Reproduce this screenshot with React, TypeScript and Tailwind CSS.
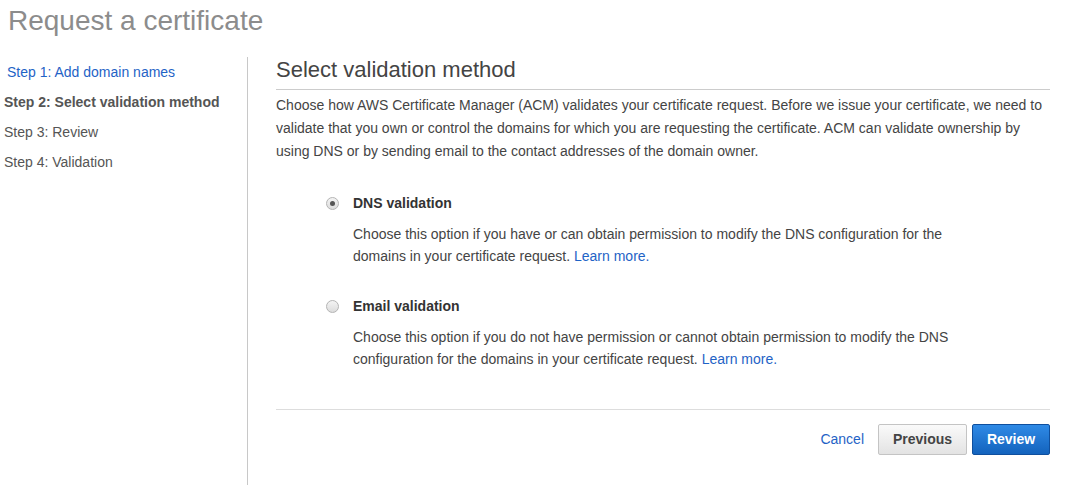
export default function App() {
  const steps = [
    { label: "Step 1: Add domain names", state: "link" },
    { label: "Step 2: Select validation method", state: "active" },
    { label: "Step 3: Review", state: "todo" },
    { label: "Step 4: Validation", state: "todo" },
  ]

  const options = [
    {
      id: "dns",
      title: "DNS validation",
      checked: true,
      text: "Choose this option if you have or can obtain permission to modify the DNS configuration for the domains in your certificate request.",
    },
    {
      id: "email",
      title: "Email validation",
      checked: false,
      text: "Choose this option if you do not have permission or cannot obtain permission to modify the DNS configuration for the domains in your certificate request.",
    },
  ]

  return (
    <div className="w-[1067px] h-[485px] bg-white overflow-hidden font-['Liberation_Sans',Arial,sans-serif] text-[#444]">
      <h1 className="text-[28px] leading-[32px] text-[#8c8c8c] pl-[8px] pt-[5px]">
        Request a certificate
      </h1>

      <div className="flex mt-[20px] h-[428px]">
        <nav className="w-[248px] shrink-0 border-r border-[#c8c8c8]">
          <ul className="text-[14px] leading-[30px]">
            {steps.map((s) => (
              <li
                key={s.label}
                className={
                  s.state === "link"
                    ? "pl-[7px] text-[#1f63c6]"
                    : s.state === "active"
                      ? "pl-[4px] font-bold text-[#555]"
                      : "pl-[4px] text-[#555]"
                }
              >
                {s.label}
              </li>
            ))}
          </ul>
        </nav>

        <main className="ml-[28px] w-[774px]">
          <h2 className="text-[22px] leading-[26px] text-[#444] pb-[6px] border-b border-[#cccccc]">
            Select validation method
          </h2>
          <p className="text-[14px] leading-[23px] mt-[4px] pr-[4px]">
            Choose how AWS Certificate Manager (ACM) validates your certificate request. Before we issue your
            certificate, we need to validate that you own or control the domains for which you are requesting the
            certificate. ACM can validate ownership by using DNS or by sending email to the contact addresses of the
            domain owner.
          </p>

          <div className="pl-[50px] mt-[29px] flex flex-col gap-[28px]">
            {options.map((o) => (
              <div key={o.id} className="flex">
                <span className="mt-[5px] w-[13px] h-[13px] rounded-full border border-[#b4b4b4] bg-gradient-to-b from-[#f4f4f4] to-[#dcdcdc] flex items-center justify-center shrink-0">
                  {o.checked && <span className="w-[5px] h-[5px] rounded-full bg-[#555]" />}
                </span>
                <div className="ml-[14px] w-[600px]">
                  <div className="text-[14px] leading-[22px] font-bold text-[#333]">{o.title}</div>
                  <p className="text-[14px] leading-[22px] mt-[9px] text-[#444]">
                    {o.text} <a className="text-[#1f63c6]">Learn more.</a>
                  </p>
                </div>
              </div>
            ))}
          </div>

          <div className="mt-[39px] border-t border-[#dddddd] flex justify-end items-center pt-[14px]">
            <a className="text-[14px] text-[#1f63c6] mr-[14px]">Cancel</a>
            <button className="w-[89px] h-[31px] rounded-[2px] border border-[#c4c4c4] bg-gradient-to-b from-[#fafafa] to-[#e3e3e3] text-[14px] font-bold text-[#444]">
              Previous
            </button>
            <button className="ml-[5px] w-[78px] h-[31px] rounded-[2px] border border-[#0f4f9e] bg-gradient-to-b from-[#2f8ae6] to-[#1363bd] text-[14px] font-bold text-white">
              Review
            </button>
          </div>
        </main>
      </div>
    </div>
  )
}
